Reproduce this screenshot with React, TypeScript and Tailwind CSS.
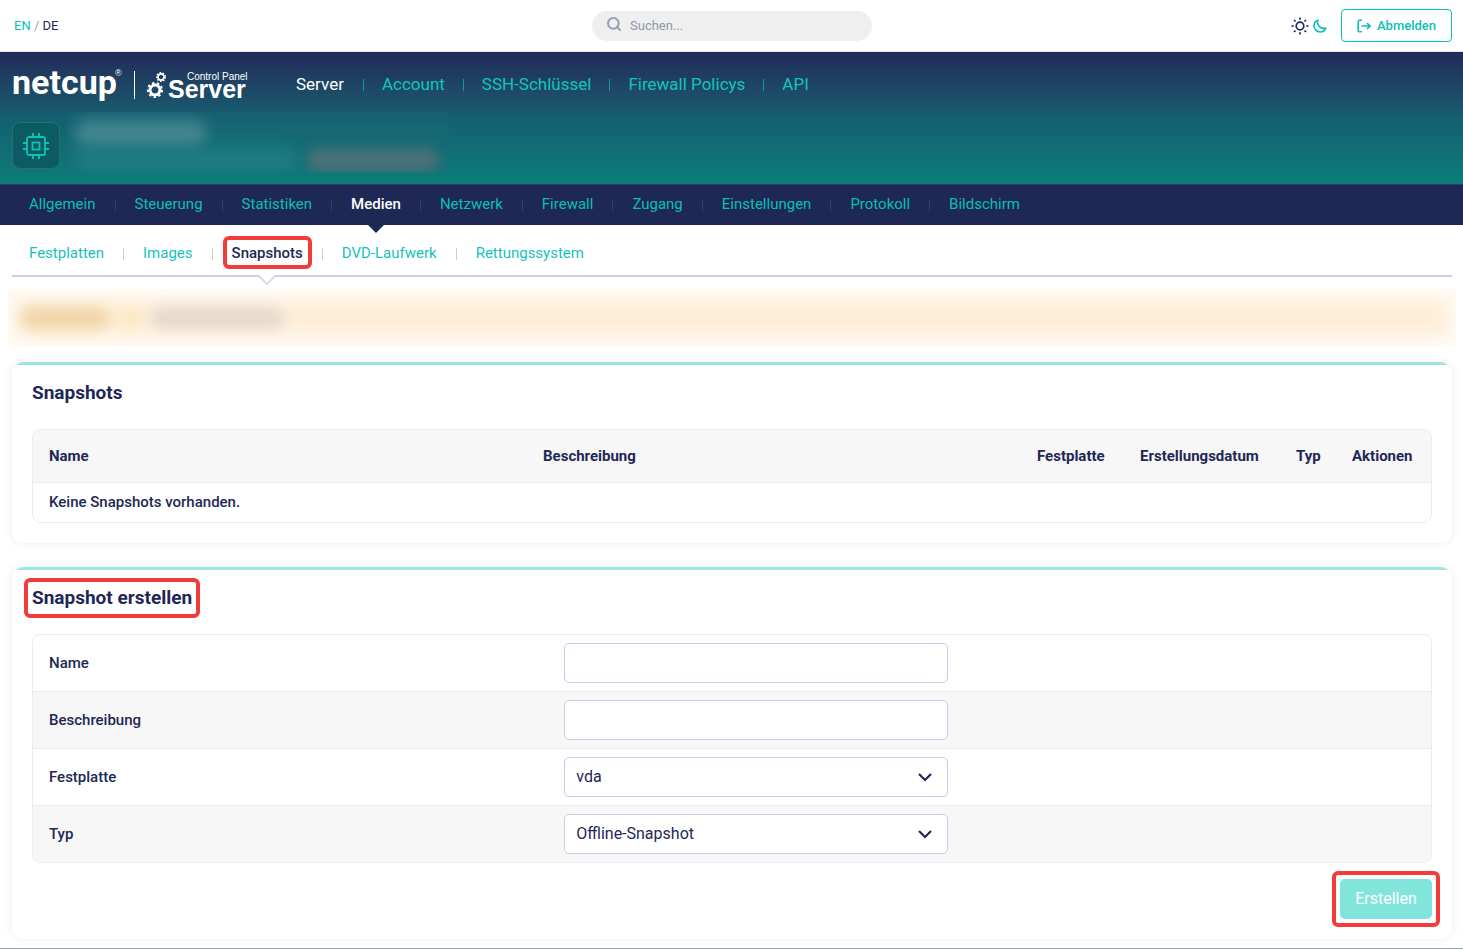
import React, { useState } from "react";
import { Search } from "lucide-react";

const mainNav = ["Server", "Account", "SSH-Schlüssel", "Firewall Policys", "API"];

const serverNav = [
  "Allgemein",
  "Steuerung",
  "Statistiken",
  "Medien",
  "Netzwerk",
  "Firewall",
  "Zugang",
  "Einstellungen",
  "Protokoll",
  "Bildschirm",
];

const mediaNav = ["Festplatten", "Images", "Snapshots", "DVD-Laufwerk", "Rettungssystem"];

const Gear = ({ x, y, r }: { x: number; y: number; r: number }) => (
  <g transform={`translate(${x} ${y}) scale(${r})`} fill="none" stroke="white">
    <circle r="0.62" strokeWidth="0.36" />
    <circle r="0.88" strokeWidth="0.26" pathLength="16" strokeDasharray="1 1" />
  </g>
);

const Logo = () => (
  <svg width="238" height="42" viewBox="0 -4 238 42" className="overflow-visible" aria-label="netcup Server Control Panel">
    <text x="0" y="26" fill="white" fontFamily="Roboto, sans-serif" fontWeight="700" fontSize="34">
      netcup
    </text>
    <text x="103" y="8" fill="white" fontFamily="Liberation Sans, sans-serif" fontSize="9">
      ®
    </text>
    <path d="M122.5 3v28" stroke="white" strokeWidth="1" />
    <Gear x={149} y={9} r={5} />
    <Gear x={143} y={22} r={8} />
    <text x="175" y="12" fill="white" fontFamily="Liberation Sans, sans-serif" fontSize="10">
      Control Panel
    </text>
    <text x="156" y="30" fill="white" fontFamily="Liberation Sans, sans-serif" fontWeight="700" fontSize="25">
      Server
    </text>
  </svg>
);

const ChipIcon = () => (
  <svg width="26" height="26" viewBox="0 0 26 26" fill="none" stroke="#0cc4b5" strokeWidth="1.8">
    <rect x="4" y="4" width="18" height="18" rx="2" />
    <rect x="9.5" y="9.5" width="7" height="7" />
    <path d="M10 0v4M16 0v4M10 22v4M16 22v4M0 10h4M0 16h4M22 10h4M22 16h4" />
  </svg>
);

const SunIcon = () => (
  <svg width="18" height="18" viewBox="0 0 18 18" fill="none" stroke="currentColor" strokeWidth="1.7">
    <circle cx="9" cy="9" r="3.8" />
    <path d="M9 .5v2.300M9 15.200v2.300M.5 9h2.300M15.200 9h2.300M3 3l1.500 1.500M13.500 13.500L15 15M3 15l1.500-1.500M13.500 4.500L15 3" />
  </svg>
);

const MoonIcon = () => (
  <svg width="14" height="14" viewBox="0 0 14 14" fill="none" stroke="currentColor" strokeWidth="1.6">
    <path
      d="M5 1.2C2.600 2 1 4.200 1 6.800 1 10.200 3.800 13 7.200 13c2.600 0 4.800-1.600 5.600-4-.8.300-1.500.400-2.300.400C7.200 9.400 4.600 6.800 4.600 3.500c0-.8.100-1.600.400-2.300z"
      strokeLinejoin="round"
    />
  </svg>
);

const LogoutIcon = () => (
  <svg width="14" height="14" viewBox="0 0 14 14" fill="none" stroke="currentColor" strokeWidth="1.6">
    <path d="M5 1.200H2.600Q1.200 1.200 1.200 2.600v8.800q0 1.400 1.400 1.400H5" />
    <path d="M4.500 7H13M10 4l3 3-3 3" />
  </svg>
);

const Chevron = () => (
  <svg
    className="pointer-events-none absolute right-4 top-4"
    width="14"
    height="9"
    viewBox="0 0 14 9"
    fill="none"
    stroke="#1e2855"
    strokeWidth="2.2"
  >
    <path d="M1 1l6 6 6-6" />
  </svg>
);

const Card = ({ children }: { children: React.ReactNode }) => (
  <section className="overflow-hidden rounded-xl bg-white shadow-[0_0_10px_rgba(0,0,0,0.08)]">
    <div className="h-[3px] bg-[#97e7e0]" />
    <div className="px-5 pb-5">{children}</div>
  </section>
);

const field =
  "block h-10 w-full appearance-none rounded-[5px] border border-[#c5cce8] bg-white px-[11px] text-base text-[#1e2855]";

const App = () => {
  const [name, setName] = useState("");
  const [description, setDescription] = useState("");

  return (
    <div className="min-h-screen bg-white font-[Roboto,sans-serif] text-[15px] text-[#1e2855]">
      {/* Top bar */}
      <div className="grid h-[52px] grid-cols-[1fr_280px_1fr] items-center border-b border-gray-200 pl-3 pr-[11px]">
        <div className="pl-0.5 text-[13px]">
          <a href="#en" className="text-[#0cc0b8]">EN</a>
          <span className="text-gray-400"> / </span>
          <a href="#de">DE</a>
        </div>
        <label className="flex h-[30px] items-center gap-2 rounded-full bg-[#efefef] px-3.5">
          <Search size={16} strokeWidth={3} className="mb-1 text-[#93a1b5]" />
          <input
            type="search"
            aria-label="Suchen"
            placeholder="Suchen..."
            className="min-w-0 flex-1 bg-transparent text-[13px] placeholder:text-[#8c98a8]"
          />
        </label>
        <div className="flex items-center justify-end">
          <button aria-label="Hell"><SunIcon /></button>
          <button aria-label="Dunkel" className="ml-1 mr-3.5 text-[#0cc0b8]"><MoonIcon /></button>
          <button className="flex h-[33px] w-[111px] items-center justify-center gap-1.5 rounded border border-[#0cc0b8] text-[13px] font-medium text-[#0cc0b8]">
            <LogoutIcon />
            Abmelden
          </button>
        </div>
      </div>

      {/* Header */}
      <header className="h-[132px] bg-linear-to-b from-[#202a58] via-[#145f70] to-[#0a7d78] px-3 pt-4">
        <div className="flex h-[34px] items-center">
          <Logo />
          <nav className="ml-[27px] flex items-center text-[17px]">
            {mainNav.map((item, i) => (
              <React.Fragment key={item}>
                {i > 0 && <span className="h-3 w-px bg-[#0f9c9c]" />}
                <a href="#" className={i === 0 ? "px-[19px] text-white" : "px-[18px] text-[#12c5b8]"}>
                  {item}
                </a>
              </React.Fragment>
            ))}
          </nav>
        </div>
        <div className="mt-2.5 flex gap-[7px]">
          <div className="mt-2.5 flex h-[47px] w-12 items-center justify-center rounded-lg border border-[#2a7079] bg-[#0c5b63]">
            <ChipIcon />
          </div>
          <div className="h-[61px] w-[382px] overflow-hidden bg-[#1f6d77]/30 pl-2 pt-2">
            <div className="h-7 w-[132px] rounded-full bg-[#43868f] blur-[7px]" />
            <div className="flex gap-2.5">
              <div className="h-6 w-[222px] rounded-full bg-[#207c83] blur-[8px]" />
              <div className="h-6 w-[132px] rounded-full bg-[#4a7078] blur-[6px]" />
            </div>
          </div>
        </div>
      </header>

      {/* Server navigation */}
      <nav className="flex h-[41px] items-center border-t border-[#2d3a63] bg-[#1e2855] px-2.5">
        {serverNav.map((item, i) => (
          <React.Fragment key={item}>
            {i > 0 && <span className="h-3 w-px bg-[#27486b]" />}
            <a
              href="#"
              className={
                item === "Medien"
                  ? "relative flex h-10 items-center px-[19px] pb-0.5 font-medium text-white"
                  : "flex h-10 items-center px-[19px] pb-0.5 text-[#0cbfb3]"
              }
            >
              {item}
              {item === "Medien" && (
                <svg className="absolute left-1/2 top-full -translate-x-1/2" width="16" height="8" viewBox="0 0 16 8">
                  <path d="M0 0h16L8 8z" fill="#1e2855" />
                </svg>
              )}
            </a>
          </React.Fragment>
        ))}
      </nav>

      <main className="pl-3 pr-[11px]">
        <nav className="flex h-[52px] items-center border-b-2 border-[#c8cfe9]">
          {mediaNav.map((item, i) => (
            <React.Fragment key={item}>
              {i > 0 && <span className="mt-2 h-3 w-px bg-[#d8cdb8]" />}
              <a
                href="#"
                className={
                  item === "Snapshots"
                    ? "relative flex h-[50px] items-center px-[19px] pt-1.5 font-medium"
                    : "flex h-[50px] items-center px-[19px] pt-1.5 text-[#16c2bb] first:pl-[17px]"
                }
              >
                {item}
                {item === "Snapshots" && (
                  <>
                    <span className="absolute inset-x-2.5 top-[11px] h-[33px] rounded-md border-4 border-[#f23b3b]" />
                    <svg
                      className="absolute left-1/2 top-full -translate-x-1/2"
                      width="18"
                      height="10"
                      viewBox="0 0 18 10"
                    >
                      <path d="M1 0h16L9 9z" fill="white" />
                      <path d="M1 1l8 8 8-8" fill="none" stroke="#c8cfe9" strokeWidth="1.5" />
                    </svg>
                  </>
                )}
              </a>
            </React.Fragment>
          ))}
        </nav>

        {/* Notice */}
        <div className="-mx-1 mt-3 h-[58px] overflow-hidden bg-[#fffaf3] px-2 py-3">
          <div className="h-[34px] rounded bg-[#feeed8] blur-[7px]">
            <div className="flex h-full items-center gap-3 pl-1">
              <div className="h-6 w-[90px] rounded-full bg-[#f1d6a8]" />
              <div className="h-6 w-4 rounded-full bg-[#fae6c0]" />
              <div className="h-6 w-[134px] rounded-full bg-[#e6dace]" />
            </div>
          </div>
        </div>

        <div className="mt-[15px] flex flex-col gap-6">
          <Card>
            <h2 className="pt-3.5 text-[19px] leading-7 font-bold">Snapshots</h2>
            <div className="mt-[22px] overflow-hidden rounded-lg border border-[#ededed]">
              <table className="w-full table-fixed text-left">
                <thead className="bg-[#f7f7f7]">
                  <tr className="h-[52px] border-b border-[#ededed]">
                    <th className="px-4 font-bold">Name</th>
                    <th className="px-4 font-bold">Beschreibung</th>
                    <th className="w-[103px] px-4 font-bold">Festplatte</th>
                    <th className="w-[156px] px-4 font-bold">Erstellungsdatum</th>
                    <th className="w-14 px-4 font-bold">Typ</th>
                    <th className="w-[95px] px-4 font-bold">Aktionen</th>
                  </tr>
                </thead>
                <tbody>
                  <tr className="h-10">
                    <td colSpan={6} className="px-4 font-medium">Keine Snapshots vorhanden.</td>
                  </tr>
                </tbody>
              </table>
            </div>
          </Card>

          <Card>
            <form>
              <h2 className="pt-3.5 text-[19px] leading-7 font-bold">
                <span className="relative inline-block">
                  Snapshot erstellen
                  <span className="absolute -inset-x-2 -inset-y-1.5 rounded-md border-4 border-[#f23b3b]" />
                </span>
              </h2>
              <div className="mt-[22px] divide-y divide-[#ededed] overflow-hidden rounded-lg border border-[#ededed] font-medium">
                <div className="flex h-[57px] items-center">
                  <label htmlFor="name" className="w-[38%] px-4">Name</label>
                  <div className="w-96">
                    <input id="name" className={field} value={name} onChange={(e) => setName(e.target.value)} />
                  </div>
                </div>
                <div className="flex h-[57px] items-center bg-[#f7f7f7]">
                  <label htmlFor="description" className="w-[38%] px-4">Beschreibung</label>
                  <div className="w-96">
                    <input
                      id="description"
                      className={field}
                      value={description}
                      onChange={(e) => setDescription(e.target.value)}
                    />
                  </div>
                </div>
                <div className="flex h-[57px] items-center">
                  <label htmlFor="disk" className="w-[38%] px-4">Festplatte</label>
                  <div className="relative w-96 font-normal">
                    <select id="disk" className={field}>
                      <option>vda</option>
                    </select>
                    <Chevron />
                  </div>
                </div>
                <div className="flex h-14 items-center bg-[#f7f7f7]">
                  <label htmlFor="type" className="w-[38%] px-4">Typ</label>
                  <div className="relative w-96 font-normal">
                    <select id="type" className={field}>
                      <option>Offline-Snapshot</option>
                    </select>
                    <Chevron />
                  </div>
                </div>
              </div>
              <div className="mt-4 flex justify-end">
                <button
                  type="button"
                  className="relative h-10 w-[92px] rounded-[5px] bg-[#82e5dc] text-base text-white"
                >
                  Erstellen
                  <span className="absolute -inset-2 rounded-md border-4 border-[#f23b3b]" />
                </button>
              </div>
            </form>
          </Card>
        </div>
      </main>
      <footer className="mt-[9px] h-0.5 border-t border-gray-400" />
    </div>
  );
};

export default App;
